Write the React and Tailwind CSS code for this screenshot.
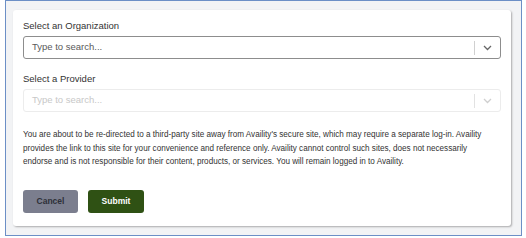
import React from "react";

function Chevron({ color }) {
  return (
    <svg width="9" height="6" viewBox="0 0 9 6" fill="none">
      <path d="M1 1l3.5 3.5L8 1" stroke={color} strokeWidth="1.3" />
    </svg>
  );
}

function SelectBox({ disabled }) {
  return (
    <div
      className={
        "flex h-[23px] w-full items-center rounded-[3px] border " +
        (disabled ? "border-[#ececec] bg-white" : "border-[#8d8d8d] bg-white")
      }
    >
      <span
        className={
          "flex-1 pl-[8px] text-[9.5px] " +
          (disabled ? "text-[#c8c8c8]" : "text-[#5a5a5a]")
        }
      >
        Type to search...
      </span>
      <div
        className={"h-[14px] w-px " + (disabled ? "bg-[#e2e2e2]" : "bg-[#d0d0d0]")}
      />
      <div className="flex w-[25px] items-center justify-center">
        <Chevron color={disabled ? "#cfcfcf" : "#666"} />
      </div>
    </div>
  );
}

export default function App() {
  return (
    <div
      className="h-[238px] w-[526px] bg-white"
      style={{ fontFamily: '"Liberation Sans", Arial, sans-serif' }}
    >
      <div className="ml-[5px] h-[236px] w-[517px] border border-[#6c8fc6] bg-[#f2f3f5] pl-[7px] pt-[9px]">
        <div className="h-[216px] w-[498px] rounded-[3px] bg-white px-[10px] pt-[10px] shadow-[1px_1px_2px_rgba(0,0,0,0.3)]">
          <div className="text-[9.5px] leading-[12px] text-[#333]">Select an Organization</div>
          <div className="mt-[4px]">
            <SelectBox />
          </div>
          <div className="mt-[14px] text-[9.5px] leading-[12px] text-[#333]">Select a Provider</div>
          <div className="mt-[4px]">
            <SelectBox disabled />
          </div>
          <p className="mt-[16px] w-[466px] text-[8.15px] leading-[13.5px] text-[#333]">
            You are about to be re-directed to a third-party site away from Availity's secure site, which may require a separate log-in. Availity provides the link to this site for your convenience and reference only. Availity cannot control such sites, does not necessarily endorse and is not responsible for their content, products, or services. You will remain logged in to Availity.
          </p>
          <div className="mt-[21px] flex gap-[10px]">
            <button className="h-[23px] w-[55px] rounded-[3px] bg-[#7b7e8e] text-[8.5px] font-bold text-[#2e3038]">
              Cancel
            </button>
            <button className="h-[23px] w-[56px] rounded-[3px] bg-[#2f5114] text-[8.5px] font-bold text-white">
              Submit
            </button>
          </div>
        </div>
      </div>
    </div>
  );
}
